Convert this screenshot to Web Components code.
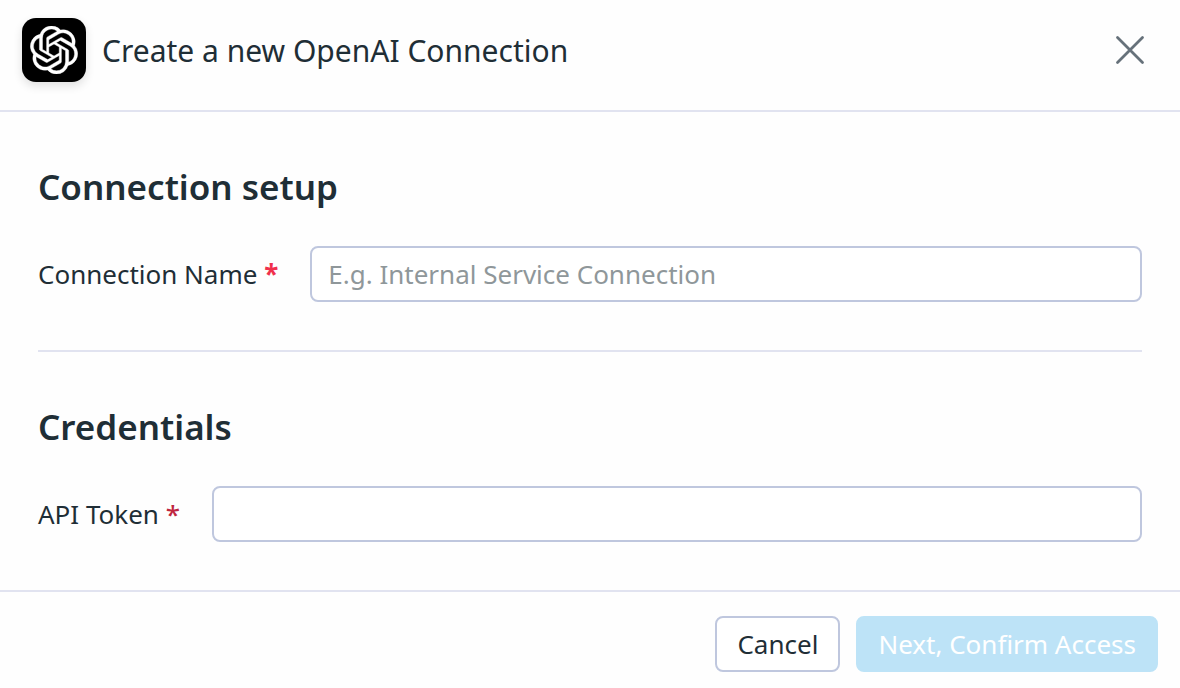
<!DOCTYPE html>
<html lang="en">
<head>
<meta charset="utf-8">
<meta name="viewport" content="width=device-width, initial-scale=1">
<title>Create a new OpenAI Connection</title>
<style>
  body {
    margin: 0;
    background: #fefefe;
    color: #1f2e36;
    font-family: "Noto Sans", "Open Sans", sans-serif;
    font-size: 26px;
    --line: #e1e3f0;
    --field-line: #bfc7de;
  }
</style>
</head>
<body>
<connection-dialog>
  <openai-logo slot="logo"></openai-logo>
  <span slot="title">Create a new OpenAI Connection</span>
  <form-section heading="Connection setup">
    <text-field label="Connection Name" name="connection-name" placeholder="E.g. Internal Service Connection" style="--required: #f0304c; --required-weight: 700"></text-field>
  </form-section>
  <form-section heading="Credentials">
    <text-field label="API Token" name="api-token" style="--required: #bf263e; --required-weight: 500"></text-field>
  </form-section>
  <action-button slot="actions">Cancel</action-button>
  <action-button slot="actions" variant="primary" disabled>Next, Confirm Access</action-button>
</connection-dialog>

<template id="dialog-template">
  <style>
    :host { display: block; }
    header {
      display: flex;
      align-items: center;
      gap: 16px;
      padding: 18px 28px 28px 22px;
      border-bottom: 2px solid var(--line);
    }
    h1 {
      flex: 1;
      margin: 0;
      padding-top: 2px;
      font-size: 30px;
      line-height: 40px;
      font-weight: 400;
    }
    .close {
      display: flex;
      padding: 4px;
      border: 0;
      background: none;
      color: #66717a;
      cursor: pointer;
    }
    footer {
      display: flex;
      justify-content: flex-end;
      gap: 16px;
      padding: 24px 22px 16px;
      border-top: 2px solid var(--line);
    }
    main { padding: 0 38px; }
  </style>
  <section role="dialog" aria-labelledby="title">
    <header>
      <slot name="logo"></slot>
      <h1 id="title"><slot name="title"></slot></h1>
      <button class="close" type="button" aria-label="Close">
        <svg width="36" height="36" viewBox="0 0 36 36" fill="none" stroke="currentColor" stroke-width="2.8" stroke-linecap="round"><path d="M5.5 5.5 30.5 30.5M30.5 5.5 5.5 30.5"/></svg>
      </button>
    </header>
    <main><slot></slot></main>
    <footer><slot name="actions"></slot></footer>
  </section>
</template>

<template id="logo-template">
  <style>
    :host {
      display: grid;
      place-items: center;
      flex: none;
      width: 64px;
      height: 64px;
      border-radius: 14px;
      background: #000;
      box-shadow: 0 4px 10px rgba(0, 0, 0, 0.12);
    }
  </style>
  <svg width="48" height="48" viewBox="0 0 24 24" fill="#fff" stroke="#fff" stroke-width=".2" role="img" aria-label="OpenAI"><path d="M22.2819 9.8211a5.9847 5.9847 0 0 0-.5157-4.9108 6.0462 6.0462 0 0 0-6.5098-2.9A6.0651 6.0651 0 0 0 4.9807 4.1818a5.9847 5.9847 0 0 0-3.9977 2.9 6.0462 6.0462 0 0 0 .7427 7.0966 5.98 5.98 0 0 0 .511 4.9107 6.051 6.051 0 0 0 6.5146 2.9001A5.9847 5.9847 0 0 0 13.2599 24a6.0557 6.0557 0 0 0 5.7718-4.2058 5.9894 5.9894 0 0 0 3.9977-2.9001 6.0557 6.0557 0 0 0-.7475-7.0729zm-9.022 12.6081a4.4755 4.4755 0 0 1-2.8764-1.0408l.1419-.0804 4.7783-2.7582a.7948.7948 0 0 0 .3927-.6813v-6.7369l2.02 1.1686a.071.071 0 0 1 .038.052v5.5826a4.504 4.504 0 0 1-4.4945 4.4944zm-9.6607-4.1254a4.4708 4.4708 0 0 1-.5346-3.0137l.142.0852 4.783 2.7582a.7712.7712 0 0 0 .7806 0l5.8428-3.3685v2.3324a.0804.0804 0 0 1-.0332.0615L9.74 19.9502a4.4992 4.4992 0 0 1-6.1408-1.6464zM2.3408 7.8956a4.485 4.485 0 0 1 2.3655-1.9728V11.6a.7664.7664 0 0 0 .3879.6765l5.8144 3.3543-2.0201 1.1685a.0757.0757 0 0 1-.071 0l-4.8303-2.7865A4.504 4.504 0 0 1 2.3408 7.872zm16.5963 3.8558L13.1038 8.364 15.1192 7.2a.0757.0757 0 0 1 .071 0l4.8303 2.7913a4.4944 4.4944 0 0 1-.6765 8.1042v-5.6772a.79.79 0 0 0-.407-.667zm2.0107-3.0231l-.142-.0852-4.7735-2.7818a.7759.7759 0 0 0-.7854 0L9.409 9.2297V6.8974a.0662.0662 0 0 1 .0284-.0615l4.8303-2.7866a4.4992 4.4992 0 0 1 6.6802 4.66zM8.3065 12.863l-2.02-1.1638a.0804.0804 0 0 1-.038-.0567V6.0742a4.4992 4.4992 0 0 1 7.3757-3.4537l-.142.0805L8.704 5.459a.7948.7948 0 0 0-.3927.6813zm1.0976-2.3654l2.602-1.4998 2.6069 1.4998v2.9994l-2.5974 1.4997-2.6067-1.4997Z"/></svg>
</template>

<template id="section-template">
  <style>
    :host { display: block; padding: 48px 0; }
    :host(:not(:last-of-type)) { border-bottom: 2px solid var(--line); }
    h2 {
      margin: 0 0 32px;
      font-size: 35px;
      line-height: 54px;
      font-weight: 600;
    }
  </style>
  <h2></h2>
  <slot></slot>
</template>

<template id="field-template">
  <style>
    :host { display: flex; align-items: center; gap: 32px; }
    label { flex: none; line-height: 36px; }
    .mark { color: var(--required); font-weight: var(--required-weight); }
    input {
      flex: 1;
      min-width: 0;
      box-sizing: border-box;
      height: 56px;
      padding: 0 16px;
      border: 2px solid var(--field-line);
      border-radius: 8px;
      background: #fff;
      color: inherit;
      font: inherit;
    }
    input::placeholder { color: #8f979a; opacity: 1; }
  </style>
  <label for="field"><span class="text"></span> <span class="mark">*</span></label>
  <input id="field" type="text" required>
</template>

<template id="button-template">
  <style>
    :host { display: block; }
    button {
      display: block;
      box-sizing: border-box;
      height: 56px;
      padding: 0 20px;
      border: 2px solid var(--field-line);
      border-radius: 8px;
      background: #fff;
      color: inherit;
      font: inherit;
      white-space: nowrap;
      cursor: pointer;
    }
    :host([variant="primary"]) button {
      border-color: #bde3f7;
      background: #bde3f7;
      color: #fff;
    }
    button:disabled { cursor: default; }
  </style>
  <button type="button"><slot></slot></button>
</template>

<script>
  class TemplateElement extends HTMLElement {
    constructor() {
      super();
      const template = document.getElementById(this.constructor.template);
      this.attachShadow({ mode: "open" }).append(template.content.cloneNode(true));
    }
    find(selector) {
      return this.shadowRoot.querySelector(selector);
    }
  }

  class ConnectionDialog extends TemplateElement {
    static template = "dialog-template";
    connectedCallback() {
      this.find(".close").onclick = () => this.remove();
    }
  }

  class OpenaiLogo extends TemplateElement {
    static template = "logo-template";
  }

  class FormSection extends TemplateElement {
    static template = "section-template";
    connectedCallback() {
      this.find("h2").textContent = this.getAttribute("heading");
    }
  }

  class TextField extends TemplateElement {
    static template = "field-template";
    connectedCallback() {
      const input = this.find("input");
      this.find(".text").textContent = this.getAttribute("label");
      input.name = this.getAttribute("name");
      input.placeholder = this.getAttribute("placeholder") || "";
    }
  }

  class ActionButton extends TemplateElement {
    static template = "button-template";
    connectedCallback() {
      this.find("button").disabled = this.hasAttribute("disabled");
    }
  }

  customElements.define("connection-dialog", ConnectionDialog);
  customElements.define("openai-logo", OpenaiLogo);
  customElements.define("form-section", FormSection);
  customElements.define("text-field", TextField);
  customElements.define("action-button", ActionButton);
</script>
</body>
</html>
